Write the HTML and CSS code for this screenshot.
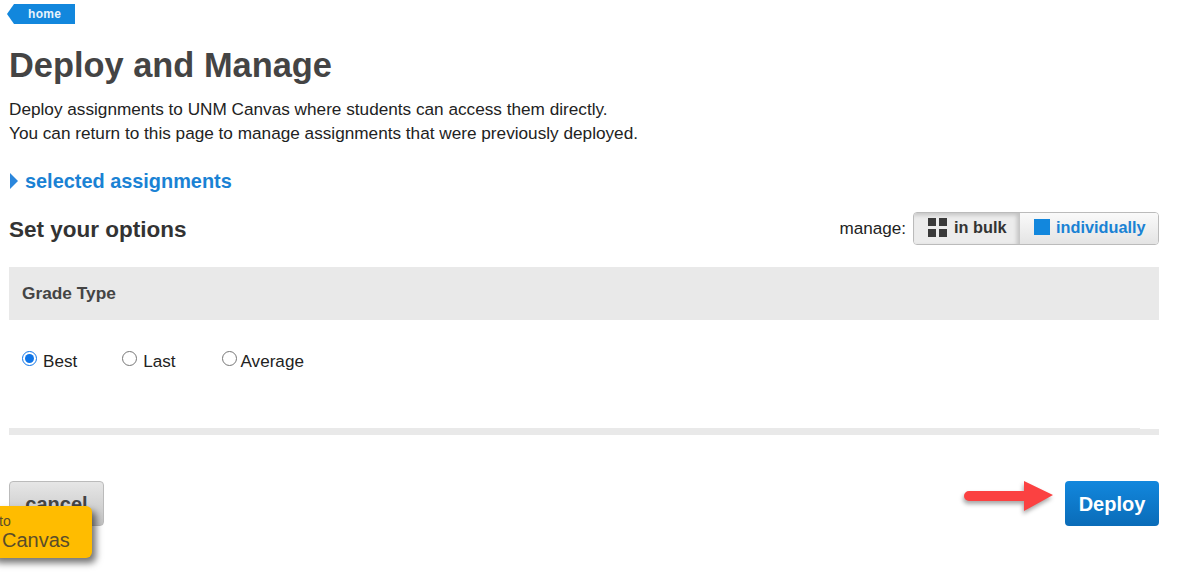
FILE: index.html
```html
<!DOCTYPE html>
<html lang="en">
<head>
<meta charset="utf-8">
<title>Deploy and Manage</title>
<link rel="stylesheet" href="styles.css">
</head>
<body>
<main class="page">
  <a class="home-tag" href="#">home</a>
  <h1 class="title">Deploy and Manage</h1>
  <p class="intro">Deploy assignments to UNM Canvas where students can access them directly.<br>You can return to this page to manage assignments that were previously deployed.</p>
  <a class="disclosure" href="#"><span class="caret"></span>selected assignments</a>
  <div class="options-head">
    <h2 class="options-title">Set your options</h2>
    <div class="manage">
      <span class="manage-label">manage:</span>
      <div class="toggle">
        <button class="toggle-btn active" type="button">
          <svg class="ico" width="19" height="19" viewBox="0 0 19 19"><path fill="#3a3a3a" d="M0 0h8v8H0zM11 0h8v8h-8zM0 11h8v8H0zM11 11h8v8h-8z"/></svg>
          in bulk
        </button>
        <button class="toggle-btn blue" type="button">
          <svg class="ico" width="16" height="16" viewBox="0 0 16 16"><rect width="16" height="16" fill="#1287dd"/></svg>
          individually
        </button>
      </div>
    </div>
  </div>
  <section class="panel">
    <h3 class="panel-head">Grade Type</h3>
    <div class="radios">
      <label class="radio r1"><input type="radio" name="grade" checked>Best</label>
      <label class="radio r2"><input type="radio" name="grade">Last</label>
      <label class="radio r3"><input type="radio" name="grade">Average</label>
    </div>
    <div class="rule"></div>
  </section>
  <div class="actions">
    <button class="btn-cancel" type="button">cancel</button>
    <div class="deploy-wrap">
      <svg class="arrow" width="100" height="44" viewBox="0 0 100 44"><path fill="#fb4141" d="M6 10H61V0L90 14 61 30V20H6a5 5 0 0 1 0-10z"/></svg>
      <button class="btn-deploy" type="button">Deploy</button>
    </div>
  </div>
</main>
<div class="help-tab"><span class="help-small">to</span><span class="help-big">Canvas</span></div>
</body>
</html>
```

FILE: styles.css
```css
* { box-sizing: border-box; }
html, body { margin: 0; padding: 0; }
body {
  background: #fff;
  color: #222;
  font-family: "Liberation Sans", Arial, sans-serif;
  overflow: hidden;
  height: 582px;
  position: relative;
}
.page { padding: 4px 29px 0 9px; }
.home-tag {
  display: block;
  width: 68px;
  height: 20px;
  margin-left: -2px;
  background: #1287dd;
  clip-path: polygon(0 50%, 7px 0, 100% 0, 100% 100%, 7px 100%);
  color: #e8f3fc;
  font-size: 12px;
  font-weight: 700;
  letter-spacing: .3px;
  line-height: 20px;
  padding-left: 21px;
  text-decoration: none;
}
.title {
  margin: 21px 0 0;
  font-size: 34.4px;
  line-height: 40px;
  font-weight: 700;
  color: #444;
}
.intro {
  margin: 12px 0 0;
  font-size: 17.2px;
  line-height: 24px;
  color: #222;
}
.disclosure {
  display: flex;
  align-items: center;
  margin-top: 24px;
  height: 24px;
  font-size: 19.9px;
  font-weight: 700;
  color: #1a82d4;
  text-decoration: none;
}
.caret {
  width: 0;
  height: 0;
  margin: 0 7px 0 1px;
  border-left: 8px solid #2a86dc;
  border-top: 8.5px solid transparent;
  border-bottom: 8.5px solid transparent;
}
.options-head {
  display: flex;
  justify-content: space-between;
  align-items: center;
  margin-top: 14px;
  height: 44px;
}
.options-title {
  margin: 0;
  padding-top: 2px;
  font-size: 22.5px;
  font-weight: 700;
  color: #333;
}
.manage { display: flex; align-items: center; gap: 7px; margin-bottom: 2px; }
.manage-label { padding-top: 1px; font-size: 17.1px; color: #222; }
.toggle {
  display: flex;
  height: 33px;
  border: 1px solid #bbb;
  border-radius: 4px;
  overflow: hidden;
}
.toggle-btn {
  display: flex;
  align-items: center;
  gap: 7px;
  border: 0;
  width: 105px;
  padding: 0 0 2px 14px;
  font: 700 16.3px "Liberation Sans", Arial, sans-serif;
  color: #333;
  background: linear-gradient(#fafafa, #e4e4e4);
}
.toggle-btn.active {
  width: 106px;
  background: #ececec;
  box-shadow: inset -3px 2px 4px rgba(0,0,0,.18);
}
.toggle-btn.blue {
  width: 138px;
  gap: 6px;
  font-size: 16.3px;
  color: #1a82d4;
}
.panel { margin-top: 16px; }
.panel-head {
  margin: 0;
  height: 53px;
  padding-left: 13px;
  background: #e9e9e9;
  font-size: 17.3px;
  font-weight: 700;
  line-height: 52px;
  color: #444;
}
.radios {
  display: flex;
  padding: 30px 0 0 13px;
  height: 108px;
}
.radio {
  display: flex;
  align-items: flex-start;
  height: 24px;
  font-size: 17.1px;
  line-height: 23px;
  color: #222;
}
.radio.r1 { margin-right: 45px; }
.radio.r2 { margin-right: 46px; }
.radio input {
  width: 15px;
  height: 15px;
  margin: 1px 6px 0 0;
  accent-color: #0f75e8;
}
.radio.r3 input { margin-right: 4px; }
.rule {
  position: relative;
  height: 7px;
  border-top: 1px solid #fff;
  background: #e9e9e9;
}
.rule::before {
  content: "";
  position: absolute;
  left: 0;
  right: 19px;
  top: -1px;
  height: 1px;
  background: #e9e9e9;
}
.actions {
  display: flex;
  justify-content: space-between;
  margin-top: 46px;
}
.btn-cancel {
  width: 95px;
  height: 45px;
  border: 1px solid #bbb;
  border-radius: 4px;
  background: linear-gradient(#e6e6e6, #c4c4c4);
  font: 700 20px "Liberation Sans", Arial, sans-serif;
  color: #444;
  padding: 2px 0 0;
}
.deploy-wrap { display: flex; align-items: flex-start; }
.arrow {
  margin-right: 2px;
  overflow: visible;
  filter: drop-shadow(-1px 3px 2px rgba(0,0,0,.35));
}
.btn-deploy {
  width: 94px;
  height: 45px;
  border: 0;
  border-radius: 4px;
  background: linear-gradient(#1287dd, #0a6cb8);
  color: #fff;
  font: 700 20px "Liberation Sans", Arial, sans-serif;
  padding: 2px 0 0;
}
.help-tab {
  position: absolute;
  left: -10px;
  top: 506px;
  width: 102px;
  height: 52px;
  background: #ffbc00;
  border-radius: 6px;
  box-shadow: 4px 5px 7px rgba(0,0,0,.55);
  color: #5a4d2a;
  padding: 8px 0 0 12px;
}
.help-small { display: block; margin-left: -3px; font-size: 14px; line-height: 15px; }
.help-big { display: block; font-size: 20px; line-height: 22px; }
```
